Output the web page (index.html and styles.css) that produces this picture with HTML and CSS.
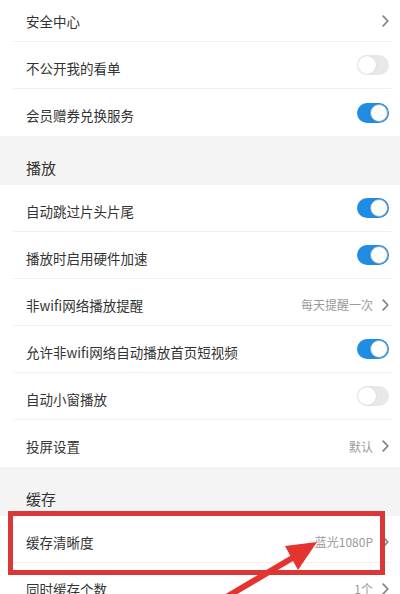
FILE: index.html
```html
<!doctype html>
<html lang="zh-CN">
<head>
    <meta charset="utf-8">
    <title>设置</title>
    <link rel="stylesheet" href="styles.css">
</head>
<body>
    <div class="screen">
        <div class="settings">
            <div class="row">
                <span class="label">安全中心</span>
                <span class="right"><svg class="chev" viewBox="0 0 7 12"><polyline points="1.2,1.2 5.8,6 1.2,10.8"/></svg></span>
            </div>
            <div class="row">
                <span class="label">不公开我的看单</span>
                <span class="switch"></span>
            </div>
            <div class="row last">
                <span class="label">会员赠券兑换服务</span>
                <span class="switch on"></span>
            </div>

            <div class="group-title">播放</div>
            <div class="row">
                <span class="label">自动跳过片头片尾</span>
                <span class="switch on"></span>
            </div>
            <div class="row">
                <span class="label">播放时启用硬件加速</span>
                <span class="switch on"></span>
            </div>
            <div class="row">
                <span class="label">非wifi网络播放提醒</span>
                <span class="right"><span class="value">每天提醒一次</span><svg class="chev" viewBox="0 0 7 12"><polyline points="1.2,1.2 5.8,6 1.2,10.8"/></svg></span>
            </div>
            <div class="row">
                <span class="label">允许非wifi网络自动播放首页短视频</span>
                <span class="switch on"></span>
            </div>
            <div class="row">
                <span class="label">自动小窗播放</span>
                <span class="switch"></span>
            </div>
            <div class="row last">
                <span class="label">投屏设置</span>
                <span class="right"><span class="value">默认</span><svg class="chev" viewBox="0 0 7 12"><polyline points="1.2,1.2 5.8,6 1.2,10.8"/></svg></span>
            </div>

            <div class="group-title">缓存</div>
            <div class="row">
                <span class="label">缓存清晰度</span>
                <span class="right"><span class="value">蓝光1080P</span><svg class="chev" viewBox="0 0 7 12"><polyline points="1.2,1.2 5.8,6 1.2,10.8"/></svg></span>
            </div>
            <div class="row">
                <span class="label">同时缓存个数</span>
                <span class="right"><span class="value">1个</span><svg class="chev" viewBox="0 0 7 12"><polyline points="1.2,1.2 5.8,6 1.2,10.8"/></svg></span>
            </div>
        </div>

        <!-- annotation drawn on top of the screenshot -->
        <div class="mark-box"></div>
        <svg class="mark-arrow" viewBox="0 0 400 594" width="400" height="594">
            <line x1="218" y1="602" x2="294" y2="557"/>
            <polygon points="317,542 285,546 298,570"/>
        </svg>
    </div>
</body>
</html>
```

FILE: styles.css
```css
html, body {
    margin: 0;
    padding: 0;
    background-color: #ffffff;
}

.screen {
    position: relative;
    width: 400px;
    height: 594px;
    overflow: hidden;
    font-family: "Noto Sans CJK SC", "Noto Sans", sans-serif;
    color: #333333;
}

.settings {
    margin-top: -5px;
}

.row {
    height: 47px;
    box-sizing: border-box;
    margin: 0 9px 0 13px;
    padding: 5px 2px 0 13px;
    display: flex;
    align-items: center;
    justify-content: space-between;
    border-bottom: 1px solid #f0f0f0;
}

.row.last {
    border-bottom: none;
}

.label {
    font-size: 13.5px;
    color: #333333;
}

.right {
    display: flex;
    align-items: center;
    gap: 9px;
}

.value {
    font-size: 12px;
    color: #9a9a9a;
}

.chev {
    width: 7px;
    height: 12px;
    fill: none;
    stroke: #858585;
    stroke-width: 1.8;
    stroke-linecap: round;
    stroke-linejoin: round;
}

.group-title {
    height: 49px;
    box-sizing: border-box;
    background-color: #f4f4f4;
    padding: 23px 0 0 26px;
    font-size: 15px;
    line-height: 18px;
    color: #333333;
}

.switch {
    position: relative;
    width: 32px;
    height: 20px;
    border-radius: 10px;
    background-color: #e8e8e8;
    margin-top: -5px;
}

.switch::after {
    content: "";
    position: absolute;
    top: 1px;
    left: 1px;
    width: 18px;
    height: 18px;
    box-sizing: border-box;
    border-radius: 50%;
    background-color: #ffffff;
    box-shadow: 0 0 2px rgba(0, 0, 0, 0.12);
}

.switch.on {
    background-color: #1d8de6;
}

.switch.on::after {
    left: 13px;
    top: 1px;
    border: 1px solid #8aa8c0;
}

.mark-box {
    position: absolute;
    left: 8px;
    top: 511px;
    width: 377px;
    height: 64px;
    box-sizing: border-box;
    border: 5px solid #da3838;
}

.mark-arrow {
    position: absolute;
    left: 0;
    top: 0;
}

.mark-arrow line {
    stroke: #e5332f;
    stroke-width: 6;
}

.mark-arrow polygon {
    fill: #e5332f;
}
```
